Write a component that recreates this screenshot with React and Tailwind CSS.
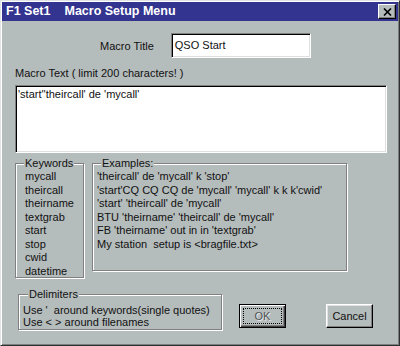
export default function App() {
  const group =
    "border border-[#808080] shadow-[inset_1px_1px_0_#fff,1px_1px_0_#fff]";
  const legend = "block w-fit -mt-[7px] h-[13px] px-[1px] bg-[#b5bcbc] leading-[13px]";
  const keywords = ["mycall", "theircall", "theirname", "textgrab", "start", "stop", "cwid", "datetime"];
  const examples = [
    "'theircall' de 'mycall' k 'stop'",
    "'start'CQ CQ CQ de 'mycall' 'mycall' k k k'cwid'",
    "'start' 'theircall' de 'mycall'",
    "BTU 'theirname' 'theircall' de 'mycall'",
    "FB 'theirname' out in in 'textgrab'",
    "My station  setup is <bragfile.txt>",
  ];
  return (
    <div className="w-[400px] h-[346px] overflow-hidden bg-[#b5bcbc] border border-t-[#dfe3e3] border-l-[#dfe3e3] border-r-[#303030] border-b-[#303030] shadow-[inset_1px_1px_0_#fff,inset_-1px_-1px_0_#7a8080] p-[1px] font-['Liberation_Sans',Arial,sans-serif] text-[11px] leading-[13px] text-[#111]">
      {/* Title bar */}
      <div className="h-[19px] bg-[#333390] flex items-center pl-[4px] pr-[2px] text-white font-bold text-[12.5px]">
        <span>F1 Set1</span>
        <span className="ml-[14px]">Macro Setup Menu</span>
        <div className="ml-auto w-[18px] h-[15px] bg-[#b5bcbc] border border-t-white border-l-white border-r-black border-b-black shadow-[inset_-1px_-1px_0_#808080] flex items-center justify-center">
          <svg width="9" height="8" viewBox="0 0 9 8">
            <path d="M1 0.5 L8 7.5 M8 0.5 L1 7.5" stroke="#000" strokeWidth="1.6" fill="none" />
          </svg>
        </div>
      </div>

      {/* Macro title row */}
      <div className="mt-[12px] ml-[98px] flex items-center h-[25px]">
        <span className="mt-[2px]">Macro Title</span>
        <div className="ml-[17px] w-[140px] h-[25px] bg-white border border-t-[#808080] border-l-[#808080] border-b-white border-r-white shadow-[inset_1px_1px_0_#000,inset_-1px_-1px_0_#dfdfdf] flex items-center pl-[3px]">
          QSO Start
        </div>
      </div>

      {/* Macro text */}
      <div className="mt-[9px] ml-[13px] h-[13px]">Macro Text ( limit 200 characters! )</div>
      <div className="mt-[5px] ml-[13px] w-[372px] h-[68px] bg-white border border-t-[#808080] border-l-[#808080] border-b-white border-r-white shadow-[inset_1px_1px_0_#000,inset_-1px_-1px_0_#dfdfdf] pl-[2px] pt-[2px]">
        'start''theircall' de 'mycall'
      </div>

      {/* Keywords / Examples */}
      <div className="mt-[10px] ml-[13px] flex items-start">
        <div className={`w-[69px] h-[115px] ${group}`}>
          <span className={`${legend} ml-[8px]`}>Keywords</span>
          <div className="pl-[9px] leading-[13.5px]">
            {keywords.map((k) => (
              <div key={k}>{k}</div>
            ))}
          </div>
        </div>
        <div className={`ml-[8px] w-[255px] h-[108px] ${group}`}>
          <span className={`${legend} ml-[8px]`}>Examples:</span>
          <div className="pl-[4px] leading-[13.5px] whitespace-pre">
            {examples.map((e) => (
              <div key={e}>{e}</div>
            ))}
          </div>
        </div>
      </div>

      {/* Delimiters + buttons */}
      <div className="mt-[16px] ml-[16px] flex items-start">
        <div className={`w-[204px] h-[36px] ${group}`}>
          <span className={`${legend} ml-[9px]`}>Delimiters</span>
          <div className="pl-[4px] mt-[3px] leading-[12px] whitespace-pre">
            <div>{"Use '  around keywords(single quotes)"}</div>
            <div>{"Use < > around filenames"}</div>
          </div>
        </div>
        <div className="ml-[17px] mt-[10px] w-[47px] h-[24px] border border-black shadow-[inset_1px_1px_0_#fff,inset_-1px_-1px_0_#404040,inset_-2px_-2px_0_#808080] p-[3px]">
          <div className="w-full h-full border border-dotted border-black flex items-center justify-center text-[#4f5454] [text-shadow:1px_1px_0_#e8ecec]">
            OK
          </div>
        </div>
        <div className="ml-[40px] mt-[10px] w-[47px] h-[24px] border border-t-white border-l-white border-r-black border-b-black shadow-[inset_-1px_-1px_0_#808080,inset_1px_1px_0_#dfe3e3] flex items-center justify-center">
          Cancel
        </div>
      </div>
    </div>
  );
}
